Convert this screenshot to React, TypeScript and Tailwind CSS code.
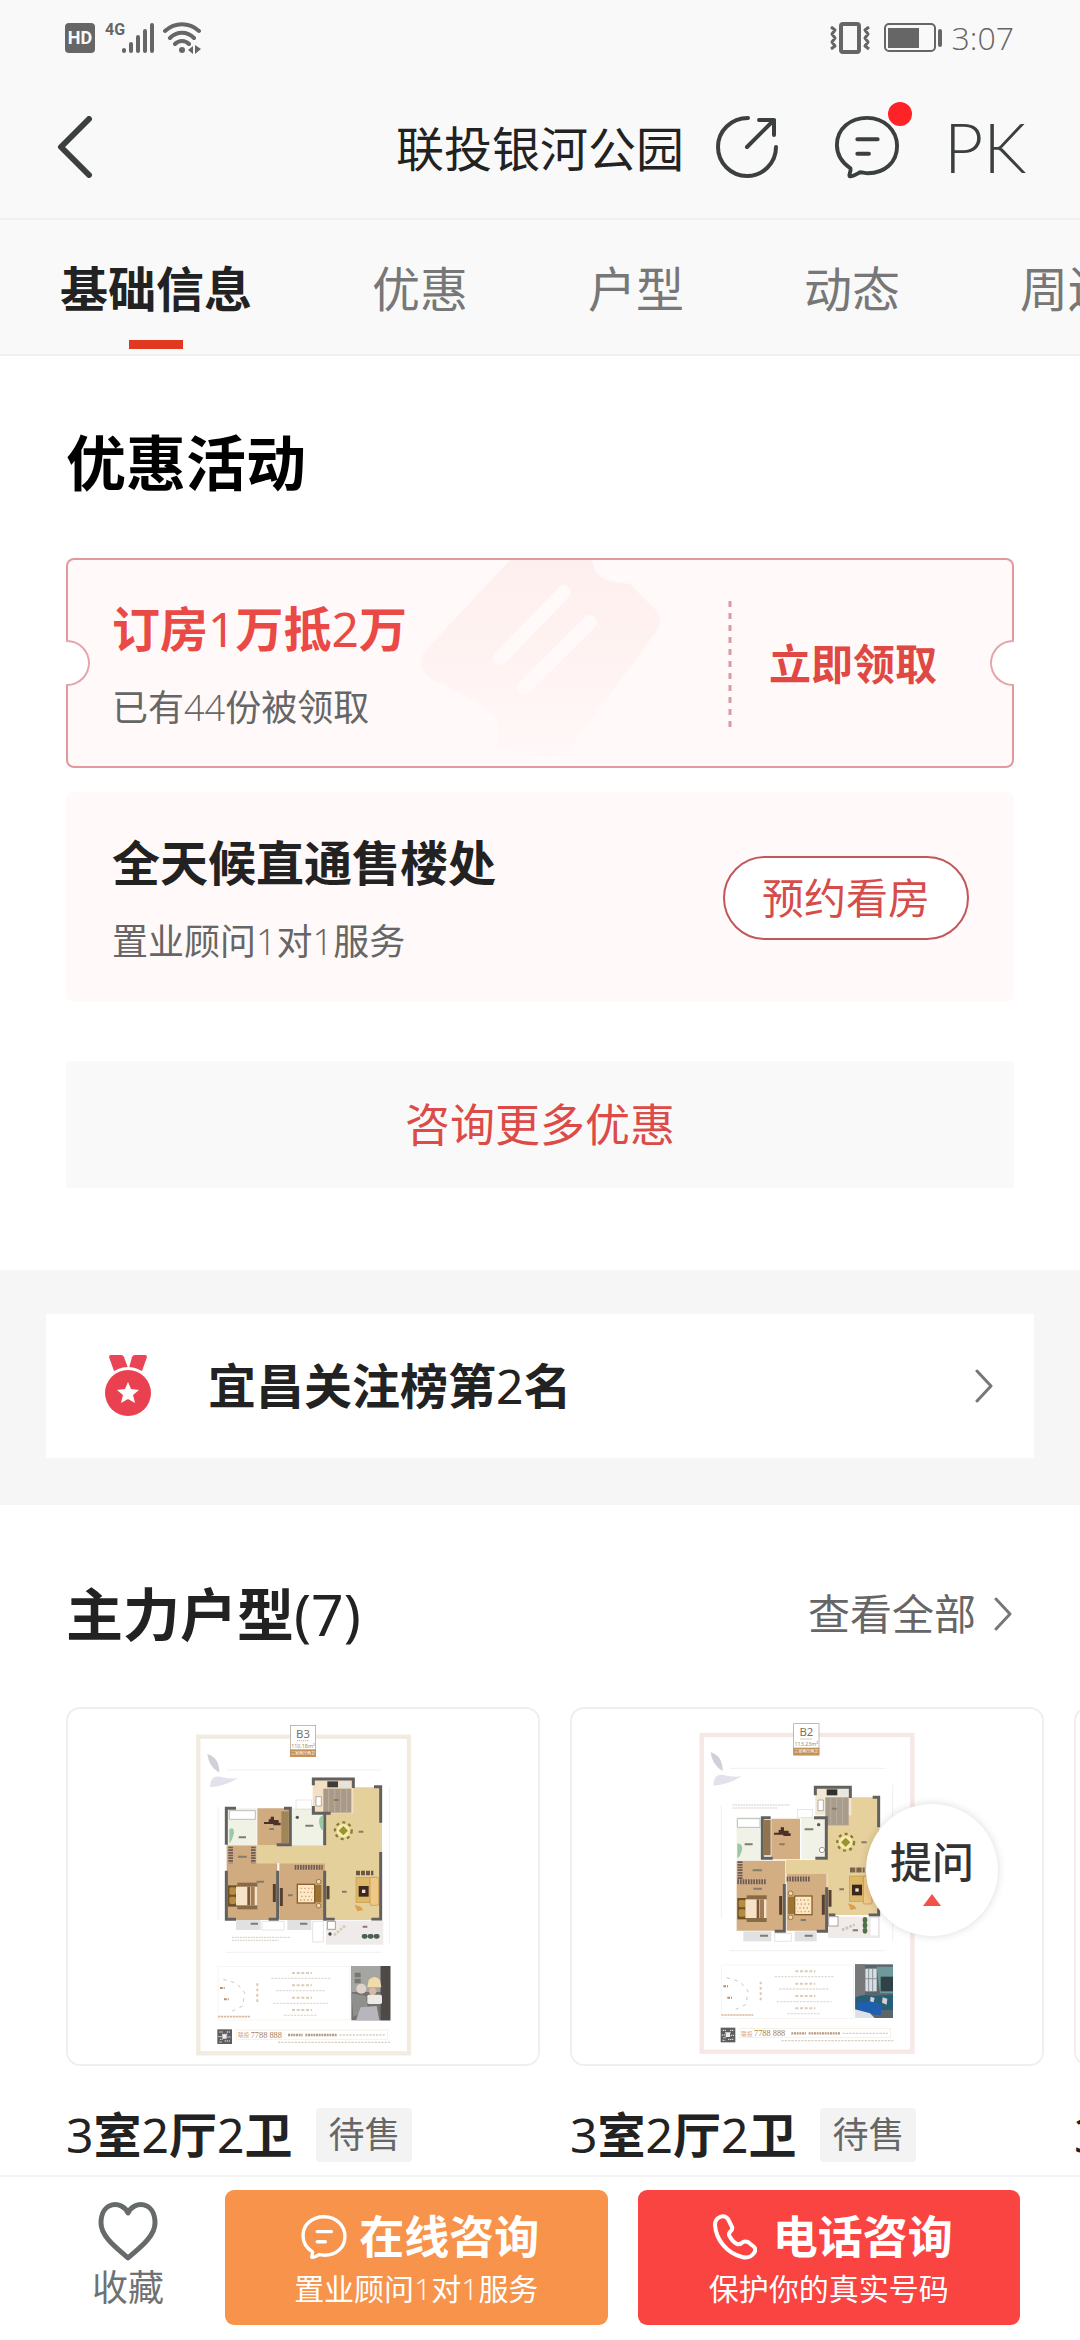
import React, { useState } from 'react';

const tabs = ['基础信息', '优惠', '户型', '动态', '周边'];

// Digits are set lighter than the characters around them
const Mixed: React.FC<{ text: string; light?: boolean }> = ({ text, light }) => (
  <>
    {text.split(/([\d()]+)/).map((part, i) =>
      i % 2 ? <span key={i} className={light ? "font-['Open_Sans',sans-serif] font-light" : 'font-normal'}>{part}</span> : part
    )}
  </>
);

const ChatIcon: React.FC<{ className: string; width?: number }> = ({ className, width = 4 }) => (
  <svg viewBox="0 0 68 68" className={className} fill="none" stroke="currentColor" strokeWidth={width} strokeLinecap="round" strokeLinejoin="round">
    <path d="M17 56 C8 50 3 42 3 32 C3 15 17 4 34 4 C52 4 65 17 65 33 C65 50 52 61 35 61 C32 61 29 60 27 60 C23 62 19 65 16 64 C15 62 18 59 17 56 Z" />
    <path d="M24 26 H45 M24 41 H36" />
  </svg>
);

const ChevronRight: React.FC = () => (
  <svg viewBox="0 0 18 34" className="h-[34px] w-[18px]" fill="none" stroke="#777" strokeWidth="3" strokeLinecap="round" strokeLinejoin="round">
    <path d="M2 2 L16 17 L2 32" />
  </svg>
);

const StatusBar: React.FC = () => (
  <div className="flex h-[75px] items-center justify-between pl-[65px] pr-[66px] text-[#666]">
    <div className="flex items-center">
      <span className="flex h-[30px] w-[30px] items-center justify-center rounded-[4px] bg-[#666] font-['Roboto',sans-serif] text-[18px] font-bold leading-none text-[#f9f9f9]">HD</span>
      <span className="ml-[10px] self-start font-['Roboto',sans-serif] text-[16px] font-bold leading-4">4G</span>
      <svg viewBox="0 0 34 32" className="-ml-1 h-8 w-[34px]" stroke="#666" strokeWidth="4" strokeLinecap="round">
        <path d="M3 28 V29 M10 22 V29 M17 15 V29 M24 9 V29 M31 3 V29" />
      </svg>
      <svg viewBox="0 0 38 32" className="ml-2 h-8 w-[38px]" fill="none" stroke="#666" strokeWidth="4" strokeLinecap="round">
        <path d="M2 9 C12 0 26 0 36 9 M7 16 C14 9 24 9 31 16 M12 22 C16 18 22 18 26 22" />
        <circle cx="19" cy="28" r="3" fill="#666" stroke="none" />
        <path d="M30 24 V32 L25 28 Z M32 23 L38 27 L32 32 Z" fill="#666" stroke="none" />
      </svg>
    </div>
    <div className="flex items-center">
      <svg viewBox="0 0 42 32" className="h-8 w-[42px]" fill="none" stroke="#666" strokeWidth="4" strokeLinejoin="round">
        <rect x="12" y="2" width="18" height="28" rx="2" />
        <path strokeWidth="3" d="M2 5 L6 8 L3 12 L6 16 L3 20 L6 24 L2 27 M40 5 L36 8 L39 12 L36 16 L39 20 L36 24 L40 27" />
      </svg>
      <svg viewBox="0 0 60 30" className="ml-[13px] h-[30px] w-[60px]">
        <rect x="1" y="1" width="50" height="27" rx="4" fill="none" stroke="#666" strokeWidth="2" />
        <rect x="4" y="5" width="31" height="20" fill="#666" />
        <rect x="54" y="6" width="4" height="18" rx="2" fill="#666" />
      </svg>
      <span className="ml-2 font-['Open_Sans',sans-serif] text-[32px] font-light leading-10">3:07</span>
    </div>
  </div>
);

const Header: React.FC = () => (
  <header className="grid h-[145px] grid-cols-[1fr_auto_1fr] items-center border-b-2 border-[#f0f0f0] text-[#3b3f40]">
    <button type="button" aria-label="返回" className="justify-self-start pl-[57px]">
      <svg viewBox="0 0 36 62" className="h-[62px] w-9" fill="none" stroke="currentColor" strokeWidth="6" strokeLinecap="round" strokeLinejoin="round">
        <path d="M32 3 L4 31 L32 59" />
      </svg>
    </button>
    <h1 className="pt-1 text-[48px] leading-[72px] text-[#222]">联投银河公园</h1>
    <div className="flex items-center pl-8">
      <button type="button" aria-label="分享">
        <svg viewBox="0 0 62 62" className="h-[62px] w-[62px]" fill="none" stroke="currentColor" strokeWidth="4" strokeLinecap="round" strokeLinejoin="round">
          <path d="M32 2 C15 2 2 15 2 31 C2 47 15 60 31 60 C47 60 60 47 60 31" />
          <path d="M31 31 L58 4 M43 4 H58 V19" />
        </svg>
      </button>
      <button type="button" aria-label="消息" className="relative ml-14">
        <ChatIcon className="h-[66px] w-[66px]" />
        <span className="absolute -right-3 -top-3 h-6 w-6 rounded-full bg-[#ff2328]" />
      </button>
      <button type="button" className="ml-11 font-['Lato',sans-serif] text-[68px] font-light leading-[72px]">PK</button>
    </div>
  </header>
);

const CouponMark: React.FC = () => (
  <svg viewBox="0 0 260 208" className="absolute left-[344px] top-0 h-[208px] w-[260px]">
    <defs>
      <linearGradient id="mark" x1="0" y1="0" x2="0" y2="1">
        <stop offset="0" stopColor="#fdefee" />
        <stop offset="0.6" stopColor="#fff4f3" />
        <stop offset="1" stopColor="#fff8f8" />
      </linearGradient>
    </defs>
    <path fill="url(#mark)" d="M98 0 H180 Q182 20 204 22 L218 24 L244 50 Q252 60 244 72 L158 188 Q148 198 134 196 L84 188 Q94 160 72 146 L18 118 Q4 106 12 92 Z" />
    <path stroke="#fffaf9" strokeWidth="14" strokeLinecap="round" d="M152 32 L88 98 M178 62 L112 128" />
  </svg>
);

const Promotions: React.FC = () => (
  <section className="px-[66px] pb-[82px] pt-[71px]">
    <h2 className="text-[60px] font-bold leading-[72px] text-black">优惠活动</h2>

    <div className="relative mt-[59px] flex items-center rounded-[8px] border-2 border-[#e09a9e] bg-[#fff9f9] pb-[31px] pl-[44px] pt-[33px]">
      <CouponMark />
      <span className="absolute -left-[2px] top-[80px] h-[46px] w-6 rounded-r-full border-2 border-l-0 border-[#e5a5ab] bg-white" />
      <span className="absolute -right-[2px] top-[80px] h-[46px] w-6 rounded-l-full border-2 border-r-0 border-[#e5a5ab] bg-white" />
      <div className="relative flex-1">
        <h3 className="text-[48px] font-bold leading-[72px] text-[#ea4a45]"><Mixed text="订房1万抵2万" /></h3>
        <p className="mt-4 text-[36px] leading-[54px] text-[#666]"><Mixed light text="已有44份被领取" /></p>
      </div>
      <svg viewBox="0 0 4 126" className="h-[126px] w-1">
        <path d="M2 0 V126" stroke="#dc9aa2" strokeWidth="3" strokeDasharray="6 6" />
      </svg>
      <button type="button" className="ml-[37px] mr-[75px] text-[42px] font-bold leading-[60px] text-[#e04843]">立即领取</button>
    </div>

    <div className="mt-6 flex items-center rounded-[8px] bg-[#fff9f9] pb-[33px] pl-[46px] pr-[45px] pt-[35px]">
      <div className="flex-1">
        <h3 className="text-[48px] font-bold leading-[72px] text-[#222]">全天候直通售楼处</h3>
        <p className="mt-4 text-[36px] leading-[54px] text-[#666]"><Mixed light text="置业顾问1对1服务" /></p>
      </div>
      <button type="button" className="rounded-full border-2 border-[#c2575b] bg-white px-[37px] py-2 text-[42px] leading-[64px] text-[#d64c49]">预约看房</button>
    </div>

    <button type="button" className="mt-[59px] block w-full rounded-[4px] bg-[#f9f9f9] py-[31px] text-[45px] leading-[65px] text-[#dc4b48]">咨询更多优惠</button>
  </section>
);

const RankBanner: React.FC = () => (
  <section className="bg-[#f6f6f6] px-[46px] pb-[47px] pt-[44px]">
    <a href="#rank" className="flex items-center bg-white py-9 pl-[58px] pr-[41px]">
      <svg viewBox="0 0 48 62" className="h-[62px] w-12">
        <path d="M5 2 Q5 0 7 0 H17 Q19 0 20 2 L24 13 L10 16 Z M43 2 Q43 0 41 0 H31 Q29 0 28 2 L25 13 L38 16 Z" fill="#ea4556" />
        <circle cx="24" cy="38" r="26" fill="#fff" />
        <circle cx="24" cy="38" r="23" fill="#ea4150" />
        <path d="M24 27 L27 34 L35 35 L29 40 L31 48 L24 44 L17 48 L19 40 L13 35 L21 34 Z" fill="#fff" />
      </svg>
      <h3 className="ml-[56px] flex-1 text-[48px] font-bold leading-[72px] text-[#222]"><Mixed text="宜昌关注榜第2名" /></h3>
      <ChevronRight />
    </a>
  </section>
);

const DoubleBed: React.FC<{ x: number; y: number }> = ({ x, y }) => (
  <g transform={`translate(${x} ${y})`}>
    <rect x="28" y="0" width="60" height="80" fill="#8a6a45" />
    <rect x="0" y="8" width="28" height="64" fill="#6e5126" />
    <rect x="4" y="14" width="20" height="22" rx="5" fill="#b58c42" />
    <rect x="4" y="42" width="20" height="22" rx="5" fill="#b58c42" />
    <rect x="24" y="12" width="64" height="56" fill="#f6e2c6" />
    <rect x="58" y="12" width="8" height="56" fill="#7a5636" />
    <rect x="68" y="12" width="12" height="56" fill="#a37c55" />
  </g>
);

const PatternBed: React.FC<{ x: number; y: number; flip?: boolean }> = ({ x, y, flip }) => (
  <g transform={flip ? `translate(${x + 76} ${y}) scale(-1 1)` : `translate(${x} ${y})`}>
    <circle cx="66" cy="0" r="7" fill="#f2d9a0" stroke="#6e5126" strokeWidth="2" />
    <circle cx="66" cy="72" r="7" fill="#f2d9a0" stroke="#6e5126" strokeWidth="2" />
    <rect x="52" y="10" width="22" height="52" fill="#9b7434" />
    <rect x="2" y="8" width="52" height="56" fill="#fbe9c5" stroke="#8a5f2c" strokeWidth="4" />
    <path d="M12 20 H48 M10 32 H46 M14 44 H48 M10 55 H46" stroke="#d69a72" strokeWidth="4" strokeDasharray="4 7" />
  </g>
);

const DiningTable: React.FC<{ x: number; y: number }> = ({ x, y }) => (
  <g>
    <circle cx={x} cy={y} r="25" fill="none" stroke="#8c7a34" strokeWidth="7" strokeDasharray="9 10" />
    <circle cx={x} cy={y} r="20" fill="#f4ecab" />
    <path d={`M${x} ${y - 14} l14 14 l-14 14 l-14 -14 Z`} fill="#9c9230" />
  </g>
);

const Desk: React.FC<{ x: number; y: number }> = ({ x, y }) => (
  <path d={`M${x} ${y + 14} h14 v-8 h6 v-8 h10 v10 h14 v8 h6 v8 h-22 v-4 h-28 Z`} fill="#4a3028" />
);

const Sofa: React.FC<{ x: number; y: number }> = ({ x, y }) => (
  <g>
    <rect x={x} y={y} width="64" height="76" fill="#dcb868" stroke="#c79d4c" strokeWidth="2" />
    <rect x={x + 42} y={y} width="26" height="84" rx="4" fill="#efc787" stroke="#c28d46" strokeWidth="2" />
    <rect x={x + 8} y={y + 26} width="30" height="32" fill="#3c2620" />
    <rect x={x + 18} y={y + 37} width="10" height="10" fill="#ece1cc" />
    <path d={`M${x - 4} ${y + 82} l18 6 l8 10 l-18 4 Z`} fill="#dd9f4f" />
  </g>
);

const QrCode: React.FC<{ x: number; y: number }> = ({ x, y }) => (
  <g>
    <rect x={x} y={y} width="44" height="44" fill="#5d5d5d" />
    <path
      d={`M${x + 6} ${y + 8} h10 M${x + 28} ${y + 8} h10 M${x + 14} ${y + 15} h18 M${x + 3} ${y + 22} h12 M${x + 30} ${y + 23} h10 M${x + 8} ${y + 30} h8 M${x + 22} ${y + 35} h16 M${x + 6} ${y + 38} h8`}
      stroke="#f3f3f3"
      strokeWidth="3"
      strokeDasharray="4 2"
    />
    <rect x={x + 15} y={y + 15} width="13" height="13" fill="#eee" />
  </g>
);

// Poster frame shared by the plans; x is the left edge of the frame
const Poster: React.FC<{ x: number; y: number; name: string; area: string; frame: string; children: React.ReactNode }> = ({ x, y, name, area, frame, children }) => (
  <>
    <rect x={x + 7} y={y + 8} width="632" height="950" fill="#fff" stroke={frame} strokeWidth="13" />
    <path d={`M${x + 34} ${y + 60} q36 10 36 56 q-32 -18 -36 -56 Z`} fill="#d0d0d8" />
    <path d={`M${x + 42} ${y + 160} q0 -36 30 -32 q30 8 54 4 q-36 24 -84 28 Z`} fill="#e2e2ec" />
    <path d={`M${x + 92} ${y + 108} h466 M${x + 66} ${y + 218} v340 M${x + 580} ${y + 158} v470 M${x + 90} ${y + 655} h466`} stroke="#e8e8e8" strokeWidth="2" fill="none" />
    <rect x={x + 283} y={y - 26} width="76" height="94" fill="#fff" stroke="#a69c86" strokeWidth="2" />
    <text x={x + 321} y={y + 12} textAnchor="middle" fontSize="34" fill="#777160">{name}</text>
    <path d={`M${x + 303} ${y + 20} h36`} stroke="#c4b69b" strokeWidth="3" strokeDasharray="4 2" />
    <text x={x + 321} y={y + 42} textAnchor="middle" fontSize="16" fill="#a08860">{area}</text>
    <rect x={x + 282} y={y + 46} width="78" height="23" fill="#c4915a" />
    <text x={x + 321} y={y + 62} textAnchor="middle" fontSize="12" fill="#fff">三室两厅两卫</text>
    {children}
    <g fill="none" stroke="#e2dcd4" strokeWidth="3">
      <rect x={x + 66} y={y + 698} width="396" height="160" stroke="#f4f1ec" strokeWidth="2" />
      <path d={`M${x + 82} ${y + 736} l40 12 l24 28 l-6 40 l-32 16`} stroke="#cfc6ba" strokeDasharray="10 14" />
      <path d={`M${x + 72} ${y + 762} h14 M${x + 84} ${y + 796} h14`} stroke="#bd8a62" strokeWidth="6" strokeDasharray="8 3" />
      <path d={`M${x + 66} ${y + 848} h96`} stroke="#d9b9a0" strokeWidth="5" strokeDasharray="7 2" />
      <path d={`M${x + 184} ${y + 748} v60`} stroke="#e0c8a4" strokeWidth="6" strokeDasharray="8 8" />
      <path d={`M${x + 288} ${y + 717} h60 M${x + 288} ${y + 754} h60 M${x + 288} ${y + 791} h60 M${x + 288} ${y + 828} h60`} stroke="#dccdb4" strokeWidth="6" strokeDasharray="9 5" />
      <path d={`M${x + 226} ${y + 733} h178 M${x + 240} ${y + 770} h150 M${x + 232} ${y + 808} h164 M${x + 264} ${y + 844} h100`} strokeWidth="4" strokeDasharray="7 3" />
    </g>
    <QrCode x={x + 64} y={y + 886} />
    <text x={x + 126} y={y + 910} fontSize="17" fill="#d6a27a">联投</text>
    <text x={x + 164} y={y + 911} fontSize="25" fill="#a8804c" className="font-['Liberation_Serif',serif]">7788 888</text>
    <path d={`M${x + 276} ${y + 903} h44 M${x + 328} ${y + 903} h96`} stroke="#b89c86" strokeWidth="7" strokeDasharray="6 2" />
    <path d={`M${x + 430} ${y + 903} h136 M${x + 246} ${y + 925} h336`} stroke="#dccfc2" strokeWidth="4" strokeDasharray="7 3" />
    <rect x={x + 122} y={y + 888} width="452" height="28" fill="none" stroke="#f3eadd" strokeWidth="2" />
  </>
);

const PlanB3: React.FC = () => (
  <svg viewBox="384 51 690 1020" className="h-[340px] w-[230px]" role="img" aria-label="B3 户型图">
    <Poster x={408} y={102} name="B3" area="110.18m²" frame="#f3ebe1">
      {/* rooms */}
      <path d="M795 262 H966 V660 H795 V490 H590 V436 H795 Z" fill="#e4d09a" />
      <path d="M500 436 H590 V490 H652 V660 H500 Z M658 490 H795 V660 H658 Z M592 325 H690 V436 H592 Z" fill="#d0ab80" />
      <path d="M500 325 H590 V436 H500 Z M696 325 H795 V436 H696 Z" fill="#f0f2e6" />
      <rect x="758" y="238" width="122" height="102" fill="#f3dfc2" />
      <rect x="790" y="266" width="84" height="72" fill="#a99a88" />
      <path d="M806 268 V338 M824 268 V338 M842 268 V338 M860 268 V338" stroke="#bdb0a0" strokeWidth="3" />
      <rect x="802" y="244" width="32" height="18" fill="#3c3c3c" />
      <rect x="846" y="246" width="20" height="16" fill="#dfe5e6" />
      <path d="M768 290 H784 V318 H768 Z" fill="#fff" stroke="#8b8b8b" strokeWidth="2" />
      {/* walls */}
      <path d="M528 325 H499 V434 M499 512 V658 H528 M626 658 H656 M653 512 V658 M672 325 H691 V434 H650 M760 256 V237 H880 V264 M760 318 V340 H812 M794 340 V436 M794 512 V658 H824 M942 260 H962 V368 M962 456 V658 H934" fill="none" stroke="#62615f" strokeWidth="9" />
      {/* bathroom fittings */}
      <path d="M508 332 H586 V358 H508 Z" fill="#fff" stroke="#b9beb8" strokeWidth="3" />
      <path d="M508 388 q14 -10 14 12 q-8 28 -14 30 Z M790 346 q-16 4 -12 26 q4 20 12 18 Z" fill="#9cc7a4" />
      <circle cx="712" cy="352" r="5" fill="#555" />
      <rect x="708" y="300" width="46" height="28" fill="none" stroke="#ddd" strokeWidth="2" />
      {/* wardrobes */}
      <rect x="664" y="334" width="22" height="96" fill="#9f8558" />
      <path d="M512 440 V490 M580 440 V490 M704 502 H788" stroke="#6d5a58" strokeWidth="14" strokeDasharray="5 3" />
      <path d="M888 519 H940" stroke="#6d5646" strokeWidth="14" strokeDasharray="12 3" />
      <path d="M643 552 V606 M664 564 V618 M804 558 V598" stroke="#55402f" strokeWidth="9" />
      <Desk x={612} y={352} />
      <DoubleBed x={504} y={548} />
      <PatternBed x={710} y={545} />
      <DiningTable x={850} y={392} />
      <Sofa x={888} y={532} />
      {/* balconies */}
      <rect x="528" y="660" width="74" height="30" fill="#dfe1e3" />
      <rect x="682" y="660" width="72" height="30" fill="#dfe1e3" />
      <path d="M606 664 H672 V690 H606 Z M758 664 H790 V726 H758 Z" fill="#fff" stroke="#ddd5cc" strokeWidth="2" />
      <rect x="798" y="662" width="172" height="72" fill="#efebea" />
      <rect x="802" y="664" width="24" height="24" fill="#fff" stroke="#b59c90" strokeWidth="3" />
      <path d="M822 706 L856 676" stroke="#d9cbb0" strokeWidth="8" strokeDasharray="8 4" />
      <path d="M912 709 H952" stroke="#4a6150" strokeWidth="14" strokeLinecap="round" strokeDasharray="4 14" />
      <circle cx="810" cy="702" r="5" fill="#444" />
      {/* room labels */}
      <path d="M536 412 h22 M628 387 h14 M736 377 h24 M534 470 h26 M590 545 h22 M684 586 h14 M572 671 h22 M720 671 h22 M896 395 h14 M846 575 h14 M908 680 h14 M822 300 h14" stroke="#857b6a" strokeWidth="6" />
      <path d="M516 712 h176 M516 721 h140" stroke="#d8cec2" strokeWidth="3" strokeDasharray="6 2" />
      {/* bedroom photo */}
      <g>
        <rect x="874" y="798" width="117" height="163" fill="#74736f" />
        <rect x="874" y="798" width="88" height="78" fill="#a5a5a1" />
        <rect x="962" y="798" width="29" height="163" fill="#4e4a48" />
        <path d="M884 818 h18 v14 h-18 Z M884 836 h18 v14 h-18 Z" fill="#777" />
        <path d="M926 840 q18 -18 34 0 l4 22 h-42 Z" fill="#f0dcab" />
        <circle cx="904" cy="866" r="15" fill="#ded2cb" />
        <circle cx="938" cy="874" r="11" fill="#d9b9a0" />
        <path d="M874 880 L918 888 L924 930 L880 950 Z" fill="#8f8f8d" />
        <rect x="922" y="884" width="44" height="28" rx="5" fill="#eceae4" />
        <path d="M902 922 L950 918 L958 961 H888 Z" fill="#b9b5bd" />
      </g>
    </Poster>
  </svg>
);

const PlanB2: React.FC = () => (
  <svg viewBox="396 51 690 1020" className="h-[340px] w-[230px]" role="img" aria-label="B2 户型图">
    <Poster x={418} y={97} name="B2" area="113.23m²" frame="#f6e8e5">
      {/* rooms */}
      <path d="M802 292 H958 V645 H802 V522 H678 V480 H802 Z" fill="#e6d09c" />
      <path d="M530 482 H676 V692 H530 Z M680 522 H800 V692 H680 Z M634 356 H720 V478 H634 Z" fill="#d3ae83" />
      <path d="M530 352 H602 V480 H530 Z M724 352 H800 V478 H724 Z" fill="#f0f2e8" />
      <rect x="766" y="262" width="108" height="84" fill="#f3e6d2" />
      <rect x="796" y="292" width="70" height="84" fill="#a89c8b" />
      <path d="M812 292 V376 M830 292 V376 M848 292 V376" stroke="#bbb0a1" strokeWidth="3" />
      <rect x="800" y="268" width="32" height="18" fill="#303030" />
      <rect x="842" y="268" width="22" height="18" fill="#e2e8ea" />
      <path d="M774 300 H790 V332 H774 Z" fill="#fff" stroke="#8b8b8b" strokeWidth="2" />
      {/* walls */}
      <path d="M632 353 H607 V475 H638 M762 353 H799 V475 H766 M766 286 V262 H871 V294 M938 292 H956 V382 M673 552 V694 H644 M800 562 V694 H770 M806 645 H826 M926 645 H956 V625" fill="none" stroke="#62615f" strokeWidth="9" />
      {/* bathroom fittings */}
      <path d="M532 356 H600 V382 H532 Z" fill="#fff" stroke="#b9beb8" strokeWidth="3" />
      <path d="M532 430 q18 2 14 20 q-6 22 -14 24 Z" fill="#9cc7a4" />
      <circle cx="776" cy="374" r="5" fill="#555" />
      <circle cx="786" cy="450" r="8" fill="#fff" stroke="#9ba39b" strokeWidth="3" />
      <rect x="712" y="328" width="46" height="24" fill="none" stroke="#ddd" strokeWidth="2" />
      {/* wardrobes */}
      <rect x="612" y="360" width="20" height="106" fill="#8f744d" />
      <path d="M540 484 V540 M532 545 H618 M680 537 H750" stroke="#6d5a58" strokeWidth="15" strokeDasharray="5 3" />
      <path d="M870 510 H914" stroke="#7a654a" strokeWidth="15" strokeDasharray="16 3" />
      <path d="M662 588 V644 M790 584 V644 M810 570 V620" stroke="#55402f" strokeWidth="9" />
      <Desk x={642} y={384} />
      <DoubleBed x={532} y={586} />
      <PatternBed x={682} y={580} flip />
      <DiningTable x={857} y={427} />
      <Sofa x={868} y={528} />
      {/* balconies */}
      <rect x="550" y="694" width="84" height="30" fill="#dfe1e3" />
      <rect x="704" y="694" width="66" height="30" fill="#dfe1e3" />
      <path d="M644 700 H694 V724 H644 Z" fill="#fff" stroke="#ddd5cc" strokeWidth="2" />
      <rect x="804" y="650" width="156" height="64" fill="#f0eae9" />
      <rect x="806" y="650" width="28" height="28" fill="#fff" stroke="#a9a19c" strokeWidth="3" />
      <path d="M846 690 L884 674" stroke="#c9c2b8" strokeWidth="8" strokeDasharray="8 4" />
      <path d="M915 658 V700" stroke="#4f7048" strokeWidth="14" strokeLinecap="round" strokeDasharray="4 12" />
      <rect x="930" y="652" width="26" height="56" fill="#fff" stroke="#ddd" strokeWidth="2" />
      {/* room labels */}
      <path d="M554 433 h24 M658 433 h16 M734 388 h26 M578 511 h28 M580 566 h26 M722 660 h16 M600 707 h24 M734 707 h24 M904 427 h16 M838 568 h14 M816 326 h14 M878 691 h16" stroke="#857b6a" strokeWidth="6" />
      <path d="M518 315 h172 M518 324 h136" stroke="#d8cec2" strokeWidth="3" strokeDasharray="6 2" />
      {/* living room photo */}
      <g>
        <rect x="885" y="793" width="114" height="161" fill="#59666c" />
        <rect x="885" y="793" width="30" height="100" fill="#77787a" />
        <rect x="916" y="806" width="34" height="68" fill="#d7dee4" />
        <path d="M926 806 V874 M938 806 V874 M916 836 H950" stroke="#8b939a" strokeWidth="3" />
        <path d="M950 800 H999 V880 H960 Z" fill="#6f9a9c" />
        <rect x="962" y="830" width="37" height="44" fill="#2f4347" />
        <path d="M888 892 Q910 880 940 888 L999 884 V930 L888 930 Z" fill="#275f78" />
        <path d="M932 890 l12 4 l-4 14 l-10 -4 Z M968 892 l14 4 l-2 18 l-14 -6 Z" fill="#d5cfd4" />
        <path d="M887 910 Q930 896 966 916 L962 946 L900 938 Z" fill="#1f5fae" />
        <path d="M885 928 L930 940 L944 954 H885 Z" fill="#dfe1e8" />
      </g>
    </Poster>
  </svg>
);

const houses = [
  { id: 'b3', title: '3室2厅2卫', tag: '待售', plan: <PlanB3 /> },
  { id: 'b2', title: '3室2厅2卫', tag: '待售', plan: <PlanB2 /> },
  { id: 'b1', title: '3室2厅2卫', tag: '待售', plan: null },
];

const HouseTypes: React.FC = () => (
  <section className="pl-[66px] pt-[73px]">
    <div className="flex items-center justify-between pr-[68px]">
      <h2 className="text-[57px] font-bold leading-[72px] text-[#222]"><Mixed text="主力户型(7)" /></h2>
      <a href="#all" className="flex items-center gap-[18px] text-[42px] leading-[60px] text-[#666]">
        查看全部
        <ChevronRight />
      </a>
    </div>
    <ul className="mt-[57px] flex gap-[30px] overflow-hidden pb-3">
      {houses.map((house) => (
        <li key={house.id} className="w-[474px] shrink-0">
          <div className="flex h-[359px] items-center justify-center rounded-[14px] border-2 border-[#efefef] bg-white">
            {house.plan}
          </div>
          <div className="mt-[42px] flex items-center gap-6">
            <h3 className="text-[48px] font-bold leading-[54px] text-[#222]"><Mixed text={house.title} /></h3>
            <span className="rounded-[4px] bg-[#f3f3f3] px-3 text-[36px] leading-[54px] text-[#666]">{house.tag}</span>
          </div>
        </li>
      ))}
    </ul>
  </section>
);

const BottomBar: React.FC = () => (
  <footer className="flex items-center border-t-2 border-[#f4f4f4] bg-white pb-[15px] pr-[60px] pt-[13px]">
    <button type="button" className="flex w-[225px] flex-col items-center pl-[31px] text-[36px] leading-[54px] text-[#6f7272]">
      <svg viewBox="0 0 60 60" className="h-[60px] w-[60px]" fill="none" stroke="#666a6a" strokeWidth="5" strokeLinejoin="round">
        <path d="M30 12 C24 -1 3 0 3 22 C3 36 20 48 30 57 C40 48 57 36 57 22 C57 0 36 -1 30 12 Z" />
      </svg>
      收藏
    </button>
    <div className="grid flex-1 grid-cols-2 gap-[30px] text-white">
      <button type="button" className="flex flex-col items-center rounded-[9px] bg-[#f7934a] pb-[15px] pt-[17px]">
        <span className="flex items-center gap-3 pl-2 text-[45px] font-bold leading-[60px]">
          <ChatIcon className="h-[46px] w-[46px]" width={5} />
          在线咨询
        </span>
        <span className="text-[30px] leading-[43px]"><Mixed light text="置业顾问1对1服务" /></span>
      </button>
      <button type="button" className="flex flex-col items-center rounded-[9px] bg-[#f94442] pb-[15px] pt-[17px]">
        <span className="flex items-center gap-4 pl-2 text-[45px] font-bold leading-[60px]">
          <svg viewBox="0 0 44 46" className="h-[46px] w-11" fill="none" stroke="currentColor" strokeWidth="4" strokeLinejoin="round">
            <path d="M7 3 Q12 1 15 5 L19 13 Q20 16 17 18 Q15 20 17 23 Q20 28 24 30 Q27 31 30 28 Q32 27 35 28 L40 32 Q44 35 41 39 Q37 45 29 43 C14 39 3 26 2 11 Q2 5 7 3 Z" />
          </svg>
          电话咨询
        </span>
        <span className="text-[30px] leading-[43px]">保护你的真实号码</span>
      </button>
    </div>
  </footer>
);

const App: React.FC = () => {
  const [activeTab, setActiveTab] = useState(tabs[0]);

  return (
    <div className="relative flex h-screen flex-col overflow-hidden bg-white font-['Noto_Sans','Noto_Sans_CJK_SC',sans-serif]">
      <div className="bg-[#f9f9f9]">
        <StatusBar />
        <Header />
        <nav className="flex h-[136px] gap-[120px] overflow-hidden border-b-2 border-[#f0f0f0] pl-[60px]">
          {tabs.map((tab) => (
            <button
              key={tab}
              type="button"
              onClick={() => setActiveTab(tab)}
              className={`relative shrink-0 pt-1 text-[48px] ${activeTab === tab ? 'font-bold text-[#222]' : 'text-[#777]'}`}
            >
              {tab}
              {activeTab === tab && <span className="absolute bottom-[5px] left-1/2 h-[9px] w-[54px] -translate-x-1/2 bg-[#e0391f]" />}
            </button>
          ))}
        </nav>
      </div>

      <main className="min-h-0 flex-1 overflow-hidden">
        <Promotions />
        <RankBanner />
        <HouseTypes />
      </main>

      <BottomBar />

      <button type="button" className="absolute bottom-[404px] right-[82px] flex h-[132px] w-[132px] flex-col items-center justify-center rounded-full bg-white text-[42px] font-medium leading-[56px] text-[#333] shadow-[0_0_8px_rgba(0,0,0,0.15)]">
        提问
        <svg viewBox="0 0 18 12" className="mt-1 h-3 w-[18px]">
          <path d="M9 0 L18 12 H0 Z" fill="#f0524a" />
        </svg>
      </button>
    </div>
  );
};

export default App;
